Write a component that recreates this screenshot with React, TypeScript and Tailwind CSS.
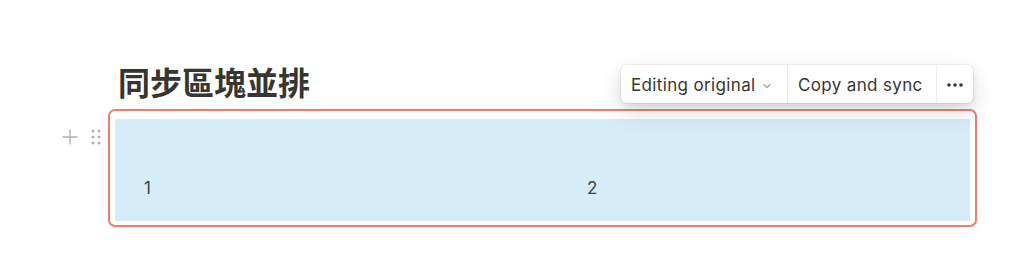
import React from 'react';

const ChevronDown: React.FC = () => (
  <svg width="10" height="10" viewBox="0 0 10 10" className="ml-[6px] mt-[1px]">
    <path d="M2 3.5 L5 6.5 L8 3.5" fill="none" stroke="#a3a29e" strokeWidth="1.2" strokeLinecap="round" strokeLinejoin="round" />
  </svg>
);

const Dots: React.FC = () => (
  <svg width="16" height="4" viewBox="0 0 16 4">
    <circle cx="2" cy="2" r="1.8" fill="#37352f" />
    <circle cx="8" cy="2" r="1.8" fill="#37352f" />
    <circle cx="14" cy="2" r="1.8" fill="#37352f" />
  </svg>
);

const PlusIcon: React.FC = () => (
  <svg width="16" height="16" viewBox="0 0 16 16">
    <path d="M8 1 V15 M1 8 H15" stroke="#b1b0ad" strokeWidth="1.4" strokeLinecap="round" />
  </svg>
);

const DragHandle: React.FC = () => (
  <svg width="10" height="16" viewBox="0 0 10 16">
    {[2, 8, 14].map((y) => (
      <React.Fragment key={y}>
        <circle cx="2" cy={y} r="1.5" fill="#b1b0ad" />
        <circle cx="8" cy={y} r="1.5" fill="#b1b0ad" />
      </React.Fragment>
    ))}
  </svg>
);

const Toolbar: React.FC = () => (
  <div className="absolute left-[513px] top-[-44px] flex h-[38px] items-stretch rounded-[6px] bg-white text-[17px] tracking-[0.35px] text-[#37352f] shadow-[0_0_0_1px_rgba(15,15,15,0.05),0_3px_6px_rgba(15,15,15,0.08),0_9px_24px_rgba(15,15,15,0.14)]">
    <div className="flex w-[166px] items-center pl-[10px] pt-[3px]">
      <span>Editing original</span>
      <ChevronDown />
    </div>
    <div className="w-px bg-[#ebebea]" />
    <div className="flex w-[148px] items-center pl-[10px] pt-[3px]">Copy and sync</div>
    <div className="w-px bg-[#ebebea]" />
    <div className="flex w-[36px] items-center justify-center pt-[1px]">
      <Dots />
    </div>
  </div>
);

const App: React.FC = () => {
  return (
    <div
      className="h-[279px] w-[1024px] overflow-hidden bg-white"
      style={{ fontFamily: 'Inter, "Noto Sans", "Noto Sans CJK TC", sans-serif' }}
    >
      <div className="ml-[108px] w-[869px] pt-[64px]">
        <h1 className="pl-[10px] text-[32px] font-bold leading-[40px] text-[#37352f]">
          同步區塊並排
        </h1>
        <div className="relative mt-[5px]">
          <div className="absolute left-[-46px] top-[20px] flex items-center gap-[13px]">
            <PlusIcon />
            <DragHandle />
          </div>
          <Toolbar />
          <div className="rounded-[7px] border-2 border-[#e9806e] px-[5px] pb-[4px] pt-[8px]">
            <div className="grid h-[102px] grid-cols-[443px_1fr] items-end bg-[#d6edf8] pl-[29px] pr-[28px] pb-[20px] text-[17px] text-[#3a4048]">
              <div>1</div>
              <div>2</div>
            </div>
          </div>
        </div>
      </div>
    </div>
  );
};

export default App;
